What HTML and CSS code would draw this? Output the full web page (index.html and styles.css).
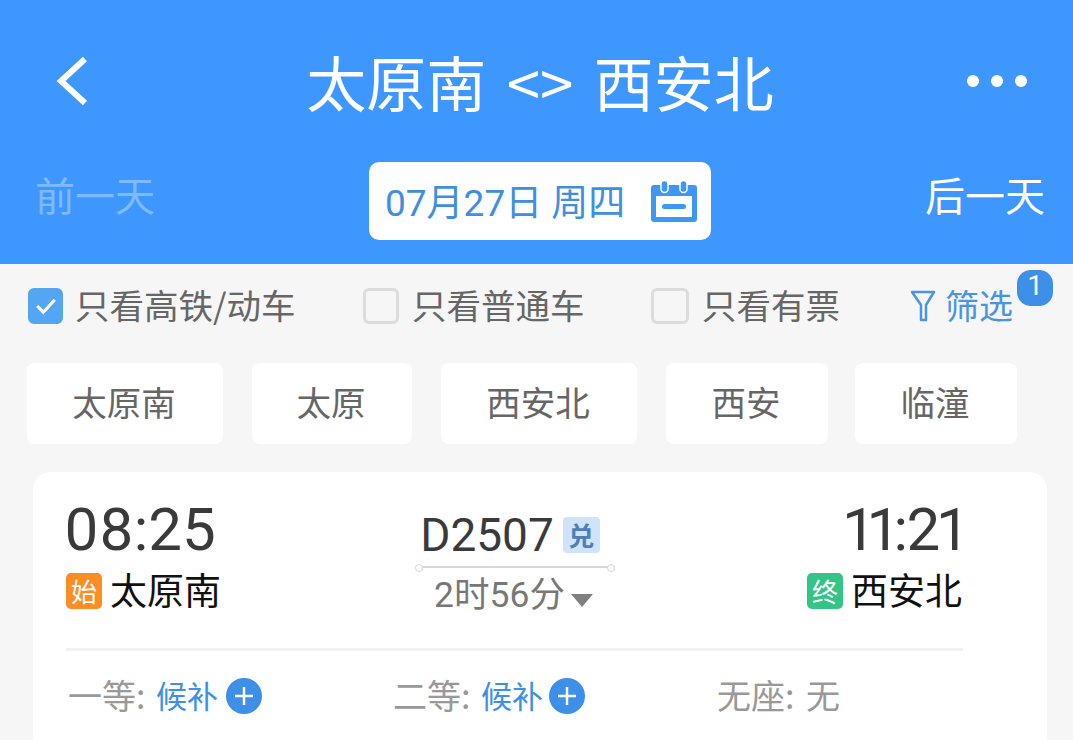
FILE: index.html
```html
<!DOCTYPE html>
<html lang="zh-CN">
<head>
<meta charset="utf-8">
<title>太原南 &lt;&gt; 西安北</title>
<link rel="stylesheet" href="styles.css">
</head>
<body>
<header class="header">
  <div class="title-row">
    <svg class="back" viewBox="0 0 34 50"><path d="M30 3 L6 25 L30 47" fill="none" stroke="#fff" stroke-width="6"/></svg>
    <h1 class="title">太原南 &lt;&gt; 西安北</h1>
    <div class="more"><i></i><i></i><i></i></div>
  </div>
  <div class="date-row">
    <span class="day day-off">前一天</span>
    <div class="date">
      <span class="date-text">07月27日 周四</span>
      <svg class="cal" viewBox="0 0 46 42"><path d="M0 8 Q0 5 3 5 H43 Q46 5 46 8 V39 Q46 42 43 42 H3 Q0 42 0 39 Z M5 16 V37 H41 V16 Z" fill="#3d97f5" fill-rule="evenodd"/><rect x="10" y="0.500" width="7" height="12" rx="3.500" fill="#3d97f5" stroke="#fff" stroke-width="1.500"/><rect x="29" y="0.500" width="7" height="12" rx="3.500" fill="#3d97f5" stroke="#fff" stroke-width="1.500"/><rect x="11" y="24" width="24" height="5" rx="2.500" fill="#3d97f5"/></svg>
    </div>
    <span class="day">后一天</span>
  </div>
</header>
<section class="filters">
  <label class="check"><span class="box box-on"><svg viewBox="0 0 34 34"><path d="M7 17 L14 24 L27 10" fill="none" stroke="#fff" stroke-width="3.500"/></svg></span><span class="label">只看高铁/动车</span></label>
  <label class="check"><span class="box"></span><span class="label">只看普通车</span></label>
  <label class="check"><span class="box box-wide"></span><span class="label">只看有票</span></label>
  <div class="screen">
    <svg class="funnel" viewBox="0 0 26 32"><path d="M2 2 H24 L16 15 V30 H11 V15 Z" fill="none" stroke="#4a94e4" stroke-width="2.500" stroke-linejoin="round"/></svg>
    <span class="label">筛选</span>
    <b class="badge">1</b>
  </div>
</section>
<nav class="chips">
  <span class="chip chip-a">太原南</span>
  <span class="chip chip-b">太原</span>
  <span class="chip chip-a">西安北</span>
  <span class="chip chip-c">西安</span>
  <span class="chip chip-c">临潼</span>
</nav>
<article class="card">
  <div class="train">
    <div class="end">
      <div class="time time-depart">08:25</div>
      <div class="station"><span class="tag tag-start">始</span>太原南</div>
    </div>
    <div class="mid">
      <div class="code">D2507<span class="dui">兑</span></div>
      <div class="track"></div>
      <div class="dur">2时56分<span class="tri"></span></div>
    </div>
    <div class="end end-right">
      <div class="time time-arrive">11:21</div>
      <div class="station"><span class="tag tag-end">终</span>西安北</div>
    </div>
  </div>
  <div class="seats">
    <div class="seat seat-1"><span class="label">一等: </span><span class="wait label">候补</span><svg class="plus" viewBox="0 0 36 36"><circle cx="18" cy="18" r="18" fill="#3d8fe8"/><path d="M9 18 H27 M18 9 V27" stroke="#fff" stroke-width="2.500"/></svg></div>
    <div class="seat seat-2"><span class="label">二等: </span><span class="wait label">候补</span><svg class="plus" viewBox="0 0 36 36"><circle cx="18" cy="18" r="18" fill="#3d8fe8"/><path d="M9 18 H27 M18 9 V27" stroke="#fff" stroke-width="2.500"/></svg></div>
    <div class="seat seat-none"><span class="label">无座: 无</span></div>
  </div>
</article>
</body>
</html>
```
FILE: styles.css
```css
* { box-sizing: border-box; }
html, body { margin: 0; padding: 0; }
body {
  width: 1073px;
  height: 740px;
  overflow: hidden;
  background: #f6f6f6;
  font-family: "Noto Sans CJK SC", "Noto Sans", sans-serif;
}
.header { height: 264px; background: #3d97ff; color: #fff; }
.title-row {
  height: 162px;
  display: flex;
  align-items: center;
  padding: 0 46px 0 55px;
}
.back { width: 34px; height: 50px; flex: none; }
.title {
  margin: 0;
  flex: 1;
  text-align: center;
  font-size: 60px;
  font-weight: 400;
  word-spacing: 7px;
  line-height: 80px;
  padding-left: 24px;
  white-space: nowrap;
}
.more { display: flex; gap: 12px; }
.more i { width: 12px; height: 12px; border-radius: 50%; background: #fff; }
.date-row {
  height: 78px;
  display: flex;
  align-items: center;
  justify-content: space-between;
  padding: 0 28px 0 35px;
}
.day { font-size: 40px; line-height: 64px; padding-bottom: 14px; width: 120px; }
.day-off { color: #7dbaff; }
.date {
  width: 342px;
  height: 78px;
  background: #fff;
  border-radius: 10px;
  color: #3f8fe0;
  display: flex;
  align-items: center;
  justify-content: space-between;
  padding: 0 14px 0 16px;
  margin-left: 94px;
  margin-right: 94px;
}
.date-text { font-size: 37px; padding-bottom: 2px; white-space: nowrap; font-family: "Roboto", "Noto Sans CJK SC", sans-serif; }
.cal { width: 46px; height: 42px; flex: none; }
.filters {
  height: 84px;
  display: flex;
  align-items: center;
  padding: 0 0 0 28px;
  position: relative;
}
.check {
  display: flex;
  align-items: center;
  font-size: 34.500px;
  color: #666;
  white-space: nowrap;
}
.label { padding-bottom: 4px; }
.check:nth-child(1) { width: 335px; }
.check:nth-child(2) { width: 288px; }
.check:nth-child(3) { width: 259px; }
.box {
  width: 36px;
  height: 36px;
  margin-right: 13px;
  border: 3px solid #dcdcdc;
  border-radius: 6px;
  flex: none;
}
.box-wide { width: 38px; margin-right: 13px; }
.box-on { width: 35px; margin-right: 12px; background: #55a5f5; border-color: #55a5f5; }
.box-on svg { display: block; width: 30px; height: 30px; }
.screen {
  display: flex;
  align-items: center;
  font-size: 34px;
  color: #4a94e4;
  white-space: nowrap;
  position: relative;
}
.funnel { width: 26px; height: 32px; margin-right: 9px; }
.badge {
  position: absolute;
  left: 107px;
  top: -10px;
  width: 36px;
  height: 36px;
  border-radius: 14px;
  background: #3d8fe8;
  color: #fff;
  font: 400 28px/32px "Roboto", sans-serif;
  text-align: center;
}
.chips {
  display: flex;
  padding: 15px 0 0 27px;
  gap: 29px;
}
.chip {
  height: 81px;
  background: #fff;
  border-radius: 8px;
  font-size: 34.500px;
  color: #666;
  display: flex;
  align-items: center;
  justify-content: center;
  padding: 0 2px 6px 0;
}
.chip-a { width: 196px; }
.chip-b { width: 160px; }
.chip-c { width: 162px; }
.chip-c:last-child { margin-left: -2px; }
.card {
  margin: 28px 26px 0 33px;
  height: 300px;
  background: #fff;
  border-radius: 18px;
  padding: 0 84px 0 33px;
}
.train {
  height: 179px;
  display: grid;
  grid-template-columns: 1fr 200px 1fr;
  border-bottom: 3px solid #f1f1f1;
  padding-top: 24px;
}
.end-right { text-align: right; }
.time {
  font-family: "Roboto", sans-serif;
  font-feature-settings: "pnum";
  font-size: 60px;
  line-height: 68px;
  color: #3a3a3a;
}
.time-depart { margin-left: -2px; }
.time-arrive { letter-spacing: -1.600px; }
.station {
  display: flex;
  align-items: center;
  font-size: 37px;
  line-height: 46px;
  color: #111;
  margin-top: 2px;
}
.end-right .station { justify-content: flex-end; padding-right: 1px; }
.tag {
  width: 36px;
  height: 36px;
  border-radius: 5px;
  color: #fff;
  font-size: 26px;
  line-height: 36px;
  text-align: center;
  margin-right: 8px;
  margin-top: 4px;
}
.tag-start { background: #fa8e25; }
.tag-end { background: #35c488; }
.mid { padding-top: 16px; text-align: center; }
.code {
  font-family: "Roboto", sans-serif;
  font-size: 46px;
  line-height: 46px;
  color: #3a3a3a;
  display: flex;
  align-items: center;
  justify-content: center;
  padding-right: 9px;
  white-space: nowrap;
}
.dui {
  width: 37px;
  height: 36px;
  margin-left: 9px;
  background: #cfe4fb;
  border-radius: 4px;
  color: #4c7fb8;
  font: 700 26px/36px "Noto Sans CJK SC", sans-serif;
}
.track {
  position: relative;
  height: 1.500px;
  background: #d8d8d8;
  margin-top: 8px;
}
.track::before,
.track::after {
  content: "";
  position: absolute;
  top: -2px;
  width: 6px;
  height: 6px;
  border: 1px solid #d8d8d8;
  border-radius: 50%;
  background: #fff;
}
.track::before { left: 0; }
.track::after { right: 0; }
.dur {
  font-family: "Roboto", "Noto Sans CJK SC", sans-serif;
  font-size: 35.500px;
  line-height: 44px;
  color: #777;
  display: flex;
  align-items: center;
  justify-content: center;
  margin-top: 5px;
  white-space: nowrap;
  padding-right: 2px;
}
.tri {
  width: 0;
  height: 0;
  margin-left: 6px;
  margin-top: 12px;
  border-left: 11px solid transparent;
  border-right: 11px solid transparent;
  border-top: 13px solid #808080;
}
.seats {
  display: flex;
  align-items: center;
  height: 90px;
  padding-left: 2px;
  font-size: 34px;
  color: #999;
}
.seat { display: flex; align-items: center; white-space: pre; }
.seat-1 { width: 325px; }
.seat-2 { width: 324px; }
.seat-2 .plus { margin-left: 6px; }
.seat-none { word-spacing: 4px; }
.wait { color: #3d8fe8; font-size: 31px; margin-left: 3px; }
.plus { width: 36px; height: 36px; margin-left: 8px; }
```
